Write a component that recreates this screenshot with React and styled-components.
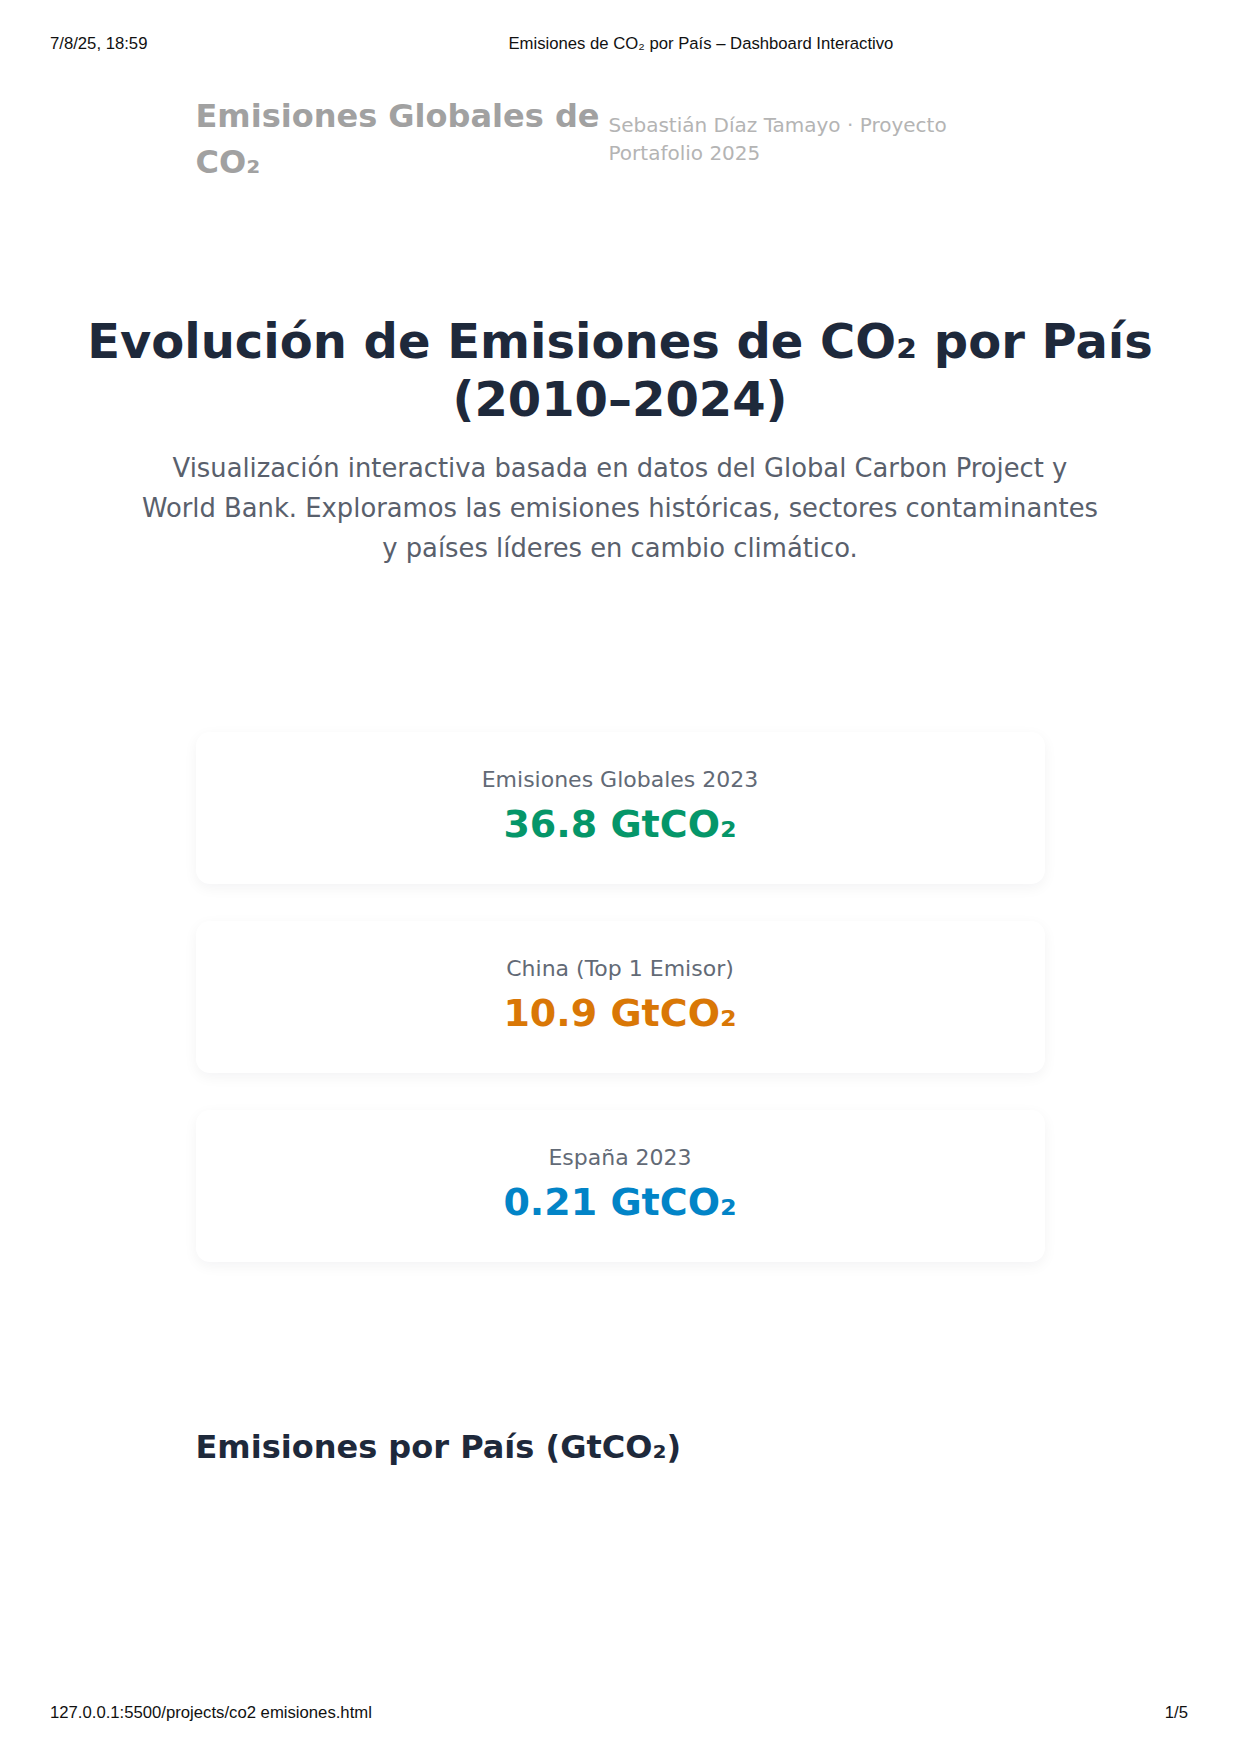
import styled, { createGlobalStyle } from "styled-components";

const stats = [
  { label: "Emisiones Globales 2023", value: "36.8 GtCO₂", tone: "#059669" },
  { label: "China (Top 1 Emisor)", value: "10.9 GtCO₂", tone: "#d97706" },
  { label: "España 2023", value: "0.21 GtCO₂", tone: "#0284c7" },
];

const GlobalStyle = createGlobalStyle`
  * {
    box-sizing: border-box;
  }

  body {
    margin: 0;
    background: #ffffff;
    font-family: "DejaVu Sans", Inter, sans-serif;
  }
`;

const App = () => {
  return (
    <>
      <GlobalStyle />
      <Page>
        <PrintBar>
          <span>7/8/25, 18:59</span>
          <PrintTitle>Emisiones de CO₂ por País – Dashboard Interactivo</PrintTitle>
        </PrintBar>

        <Main>
          <TopHeader>
            <BrandTitle>Emisiones Globales de CO₂</BrandTitle>
            <BrandByline>Sebastián Díaz Tamayo · Proyecto Portafolio 2025</BrandByline>
          </TopHeader>

          <Hero>
            <HeroTitle>Evolución de Emisiones de CO₂ por País (2010–2024)</HeroTitle>
            <HeroText>
              Visualización interactiva basada en datos del Global Carbon Project y World Bank. Exploramos las
              emisiones históricas, sectores contaminantes y países líderes en cambio climático.
            </HeroText>
          </Hero>

          <StatList>
            {stats.map((stat) => (
              <StatCard key={stat.label}>
                <StatLabel>{stat.label}</StatLabel>
                <StatValue $tone={stat.tone}>{stat.value}</StatValue>
              </StatCard>
            ))}
          </StatList>

          <SectionTitle>Emisiones por País (GtCO₂)</SectionTitle>
        </Main>

        <PrintBar $bottom>
          <span>127.0.0.1:5500/projects/co2 emisiones.html</span>
          <span>1/5</span>
        </PrintBar>
      </Page>
    </>
  );
};

export default App;

const Page = styled.div`
  width: 1240px;
  height: 1754px;
  display: flex;
  flex-direction: column;
  overflow: hidden;
`;

const PrintBar = styled.div`
  display: flex;
  align-items: center;
  justify-content: ${({ $bottom }) => ($bottom ? "space-between" : "flex-start")};
  padding: ${({ $bottom }) => ($bottom ? "0 52px 32px 50px" : "35px 50px 0")};
  font-family: "Liberation Sans", Arial, sans-serif;
  font-size: 16.7px;
  line-height: 18px;
  color: #111111;
`;

const PrintTitle = styled.span`
  margin-left: 361px;
`;

const Main = styled.main`
  flex: 1;
  display: flex;
  flex-direction: column;
`;

const TopHeader = styled.header`
  width: 849px;
  margin: 40px auto 0;
  display: flex;
  align-items: center;
`;

const BrandTitle = styled.h1`
  margin: 0;
  width: 413px;
  flex-shrink: 0;
  font-size: 32px;
  line-height: 46px;
  font-weight: 700;
  color: #a1a1a1;
`;

const BrandByline = styled.p`
  margin: 0;
  width: 360px;
  font-size: 20px;
  line-height: 28px;
  font-weight: 400;
  color: #b4b4b4;
`;

const Hero = styled.section`
  margin-top: 127px;
  display: flex;
  flex-direction: column;
  align-items: center;
  text-align: center;
  gap: 20px;
`;

const HeroTitle = styled.h2`
  margin: 0;
  max-width: 1120px;
  font-size: 48px;
  line-height: 58px;
  font-weight: 700;
  color: #1e293b;
`;

const HeroText = styled.p`
  margin: 0;
  max-width: 966px;
  font-size: 25.8px;
  line-height: 40px;
  font-weight: 400;
  color: #59606c;
`;

const StatList = styled.div`
  width: 849px;
  margin: 164px auto 0;
  display: grid;
  gap: 37px;
`;

const StatCard = styled.article`
  padding: 32px 24px 36px;
  border-radius: 14px;
  background: #ffffff;
  box-shadow: 0 4px 14px rgba(15, 23, 42, 0.05);
  display: grid;
  justify-items: center;
  gap: 4px;
`;

const StatLabel = styled.span`
  font-size: 22px;
  line-height: 32px;
  font-weight: 400;
  color: #626a76;
`;

const StatValue = styled.strong`
  font-size: 38px;
  line-height: 48px;
  font-weight: 700;
  color: ${({ $tone }) => $tone};
`;

const SectionTitle = styled.h3`
  width: 849px;
  margin: 163px auto 0;
  font-size: 32px;
  line-height: 44px;
  font-weight: 700;
  color: #1e293b;
`;
